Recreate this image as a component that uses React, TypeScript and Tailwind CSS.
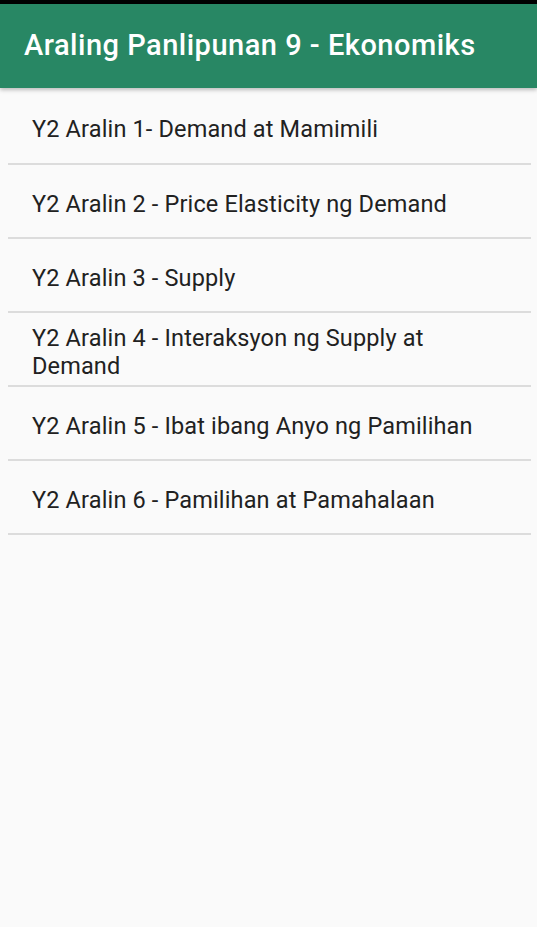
const lessons = [
  "Y2 Aralin 1- Demand at Mamimili",
  "Y2 Aralin 2 - Price Elasticity ng Demand",
  "Y2 Aralin 3 - Supply",
  "Y2 Aralin 4 - Interaksyon ng Supply at Demand",
  "Y2 Aralin 5 - Ibat ibang Anyo ng Pamilihan",
  "Y2 Aralin 6 - Pamilihan at Pamahalaan",
];

export default function App() {
  return (
    <div className="min-h-[927px] w-full bg-[#fafafa] font-['Roboto',sans-serif]">
      <div className="h-1 bg-black" />
      <header className="relative z-10 flex h-[84px] items-center bg-[#288764] px-6 shadow-[0_2px_4px_rgba(0,0,0,0.25)]">
        <h1 className="text-[29px] font-medium tracking-[0.5px] text-white">Araling Panlipunan 9 - Ekonomiks</h1>
      </header>
      <ul className="pl-2 pr-[6px]">
        {lessons.map((title, i) => (
          <li
            key={i}
            className={`flex items-center border-b-2 border-[#dcdcdc] pl-6 pr-10 pt-[6px] ${i === 0 ? "h-[77px]" : "h-[74px]"}`}
          >
            <span className="text-[23.5px] leading-[28px] tracking-[0.15px] text-[#212121]">{title}</span>
          </li>
        ))}
      </ul>
    </div>
  );
}
